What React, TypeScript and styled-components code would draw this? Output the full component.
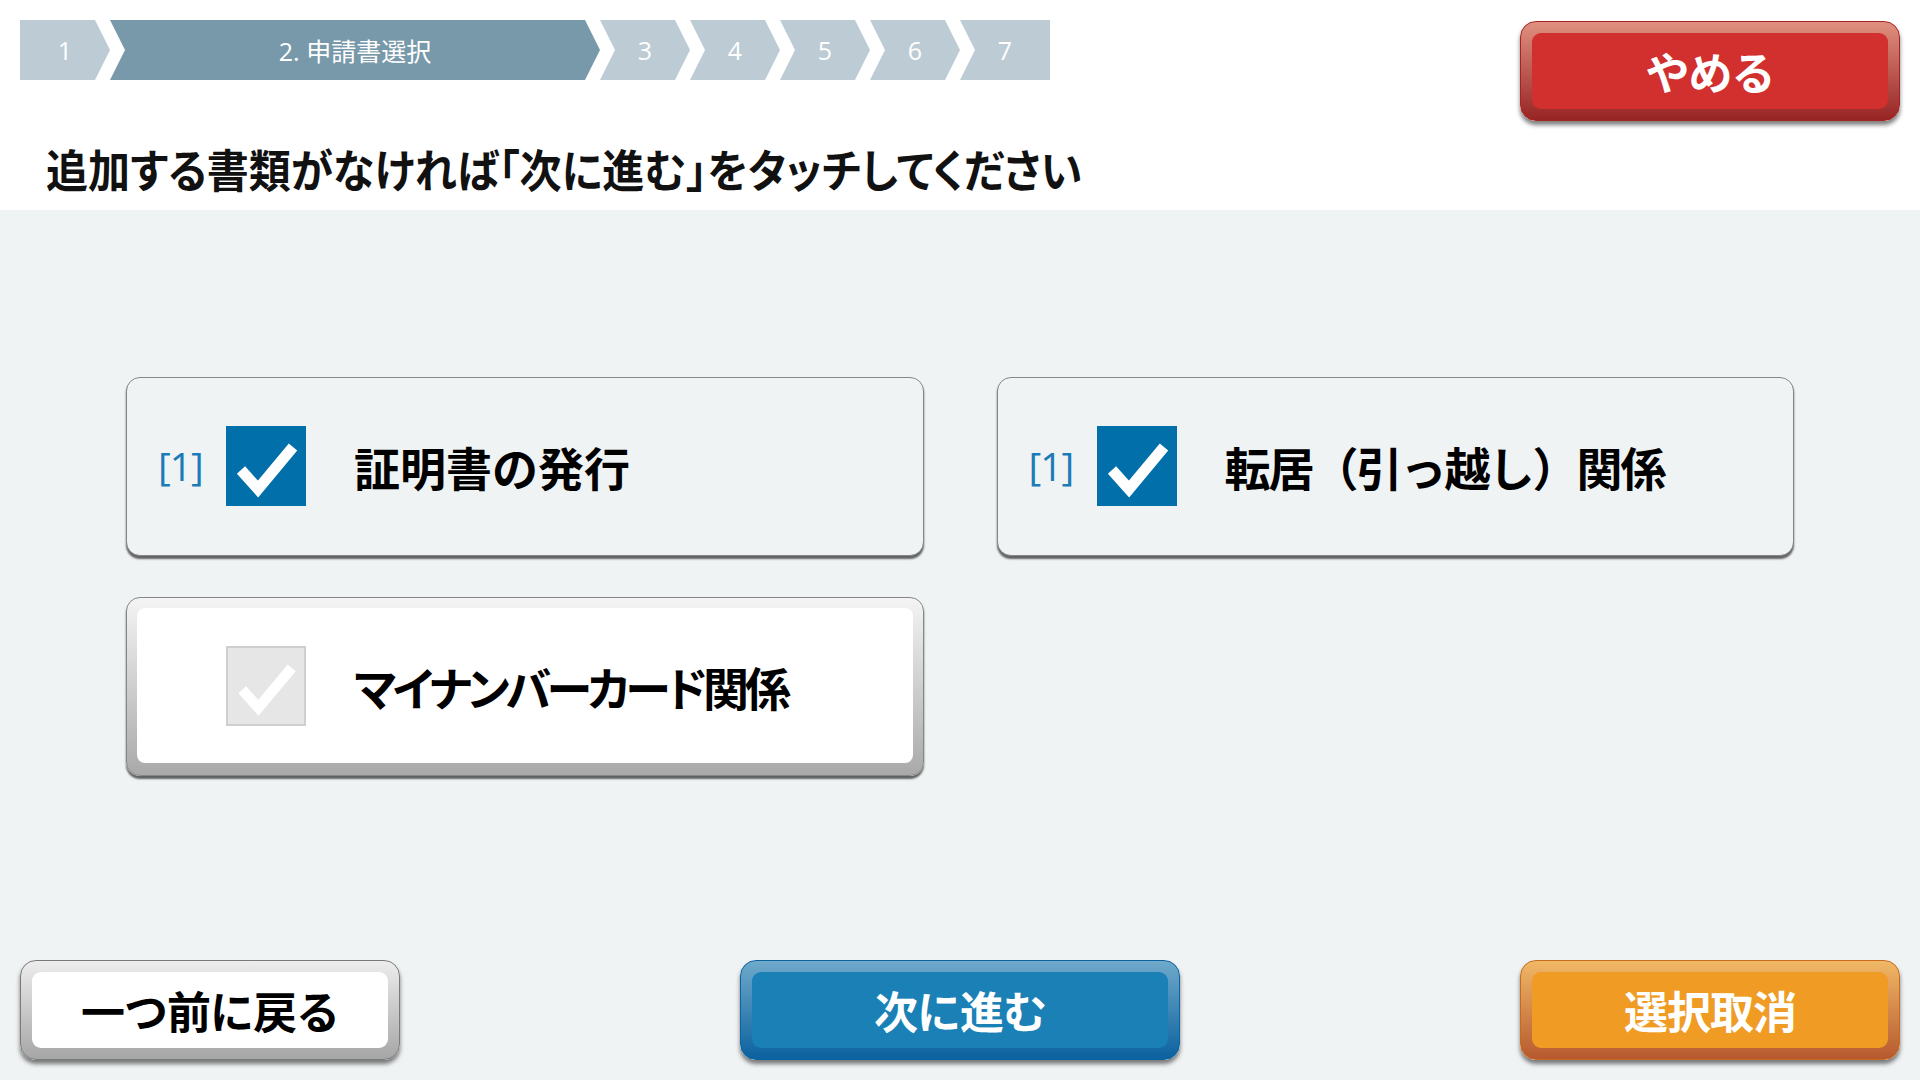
import styled, { createGlobalStyle, css } from "styled-components";

const GlobalStyle = createGlobalStyle`
  html, body {
    margin: 0;
    padding: 0;
    background: #f0f3f4;
  }
  body {
    font-family: "Open Sans", "Noto Sans CJK JP", sans-serif;
  }
`;

type Variant = "red" | "blue" | "orange" | "white";

const paleta: Record<Variant, { borda: string; topo: string; base: string; miolo: string; texto: string }> = {
  red: { borda: "#a92222", topo: "#e0907f", base: "#972424", miolo: "#d22f2f", texto: "#fff" },
  blue: { borda: "#0d62a0", topo: "#6fa9cb", base: "#0b62a0", miolo: "#1a80b6", texto: "#fff" },
  orange: { borda: "#c86b1c", topo: "#f0b866", base: "#b7592f", miolo: "#ef9b24", texto: "#fff" },
  white: { borda: "#7a7a7a", topo: "#ededed", base: "#a6a6a6", miolo: "#fff", texto: "#000" },
};

const Pagina = styled.div`
  width: 1920px;
  height: 1080px;
  display: flex;
  flex-direction: column;
  background: #f0f3f4;
  overflow: hidden;
`;

const Cabecalho = styled.header`
  background: #fff;
  padding: 20px 20px 9px;
`;

const LinhaTopo = styled.div`
  display: flex;
  justify-content: space-between;
  align-items: flex-start;
`;

const Etapas = styled.ol`
  display: flex;
  margin: 0;
  padding: 0;
  list-style: none;
`;

const Etapa = styled.li<{ $ativa?: boolean; $primeira?: boolean; $ultima?: boolean; $largura: number }>`
  width: ${(p) => p.$largura}px;
  height: 60px;
  display: flex;
  align-items: center;
  justify-content: center;
  background: ${(p) => (p.$ativa ? "#7899aa" : "#bccbd4")};
  color: #fff;
  font-size: 25px;
  ${(p) => {
    const entrada = p.$primeira ? "0 100%" : "0 100%, 15px 50%";
    const saida = p.$ultima
      ? "100% 0, 100% 100%"
      : "calc(100% - 15px) 0, 100% 50%, calc(100% - 15px) 100%";
    return css`
      clip-path: polygon(0 0, ${saida}, ${entrada});
    `;
  }}
`;

const Botao3D = styled.button<{ $cor: Variant; $largura: number }>`
  width: ${(p) => p.$largura}px;
  height: 100px;
  padding: 11px;
  border: 1px solid ${(p) => paleta[p.$cor].borda};
  border-radius: 16px;
  background: linear-gradient(${(p) => paleta[p.$cor].topo}, ${(p) => paleta[p.$cor].base});
  box-shadow: 0 4px 4px rgba(0, 0, 0, 0.5);
  cursor: pointer;
  font-family: inherit;
`;

const MioloBotao = styled.span<{ $cor: Variant }>`
  display: flex;
  align-items: center;
  justify-content: center;
  height: 100%;
  border-radius: 9px;
  background: ${(p) => paleta[p.$cor].miolo};
  color: ${(p) => paleta[p.$cor].texto};
  font-size: 44px;
  font-weight: 700;
  letter-spacing: -1px;
`;

const Titulo = styled.h1`
  margin: 20px 0 0 26px;
  height: 60px;
  line-height: 60px;
  font-size: 45px;
  font-weight: 700;
  color: #111;
  white-space: nowrap;
  font-feature-settings: "palt";
  transform: scaleX(0.935);
  transform-origin: left center;
`;

const Conteudo = styled.main`
  flex: 1;
  display: flex;
  flex-direction: column;
  padding: 167px 20px 20px;
`;

const GradeCartoes = styled.div`
  display: grid;
  grid-template-columns: repeat(2, 1fr);
  column-gap: 73px;
  row-gap: 41px;
  padding: 0 106px;
`;

const Cartao = styled.div<{ $marcado: boolean }>`
  height: 179px;
  box-sizing: border-box;
  padding: 10px 10px 12px;
  border: 1px solid #868686;
  border-radius: 14px;
  background: ${(p) => (p.$marcado ? "#f0f3f4" : "linear-gradient(#f4f4f4, #a9a9a9)")};
  box-shadow: 0 3px 2px rgba(0, 0, 0, 0.6);
  cursor: pointer;
`;

const MioloCartao = styled.div<{ $marcado: boolean }>`
  height: 100%;
  display: flex;
  align-items: center;
  padding-left: 21px;
  border-radius: 8px;
  background: ${(p) => (p.$marcado ? "transparent" : "#fff")};
`;

const Contagem = styled.span`
  width: 68px;
  font-size: 39px;
  color: #1b7bb8;
  letter-spacing: -1px;
`;

const Caixa = styled.span<{ $marcado: boolean }>`
  width: 80px;
  height: 80px;
  box-sizing: border-box;
  display: flex;
  align-items: center;
  justify-content: center;
  background: ${(p) => (p.$marcado ? "#006faa" : "#e6e6e6")};
  border: ${(p) => (p.$marcado ? "none" : "2px solid #cfcfcf")};
`;

// kana proporcional (palt) só onde o texto original é estreito
const Rotulo = styled.span<{ $proporcional?: boolean; $aperto: number }>`
  margin-left: 48px;
  font-size: 46px;
  font-weight: 700;
  color: #000;
  white-space: nowrap;
  letter-spacing: ${(p) => p.$aperto}px;
  font-feature-settings: ${(p) => (p.$proporcional ? '"palt"' : "normal")};
`;

const Rodape = styled.footer`
  margin-top: auto;
  display: flex;
  justify-content: space-between;
  align-items: center;
`;

const Visto = () => (
  <svg width="80" height="80" viewBox="0 0 80 80">
    <path d="M15 44 L32 63 L67 21" fill="none" stroke="#fff" strokeWidth="11" strokeLinejoin="miter" />
  </svg>
);

const etapas = [
  { texto: "1", largura: 90 },
  { texto: "2. 申請書選択", largura: 490, ativa: true },
  { texto: "3", largura: 90 },
  { texto: "4", largura: 90 },
  { texto: "5", largura: 90 },
  { texto: "6", largura: 90 },
  { texto: "7", largura: 90 },
];

const documentos = [
  { nome: "証明書の発行", qtd: 1, aperto: 0, proporcional: false },
  { nome: "転居（引っ越し）関係", qtd: 1, aperto: -2, proporcional: false },
  { nome: "マイナンバーカード関係", qtd: 0, aperto: -4, proporcional: true },
];

const App = () => {
  return (
    <Pagina>
      <GlobalStyle />
      <Cabecalho>
        <LinhaTopo>
          <Etapas>
            {etapas.map((e, i) => (
              <Etapa
                key={e.texto}
                $ativa={e.ativa}
                $primeira={i === 0}
                $ultima={i === etapas.length - 1}
                $largura={e.largura}
              >
                {e.texto}
              </Etapa>
            ))}
          </Etapas>
          <Botao3D $cor="red" $largura={380} style={{ marginTop: 1 }}>
            <MioloBotao $cor="red">やめる</MioloBotao>
          </Botao3D>
        </LinhaTopo>
        <Titulo>追加する書類がなければ「次に進む」をタッチしてください</Titulo>
      </Cabecalho>

      <Conteudo>
        <GradeCartoes>
          {documentos.map((d) => {
            const marcado = d.qtd > 0;
            return (
              <Cartao key={d.nome} $marcado={marcado}>
                <MioloCartao $marcado={marcado}>
                  <Contagem>{marcado ? `[${d.qtd}]` : ""}</Contagem>
                  <Caixa $marcado={marcado}>
                    <Visto />
                  </Caixa>
                  <Rotulo $aperto={d.aperto} $proporcional={d.proporcional}>
                    {d.nome}
                  </Rotulo>
                </MioloCartao>
              </Cartao>
            );
          })}
        </GradeCartoes>

        <Rodape>
          <Botao3D $cor="white" $largura={380}>
            <MioloBotao $cor="white">一つ前に戻る</MioloBotao>
          </Botao3D>
          <Botao3D $cor="blue" $largura={440}>
            <MioloBotao $cor="blue">次に進む</MioloBotao>
          </Botao3D>
          <Botao3D $cor="orange" $largura={380}>
            <MioloBotao $cor="orange">選択取消</MioloBotao>
          </Botao3D>
        </Rodape>
      </Conteudo>
    </Pagina>
  );
};

export default App;
